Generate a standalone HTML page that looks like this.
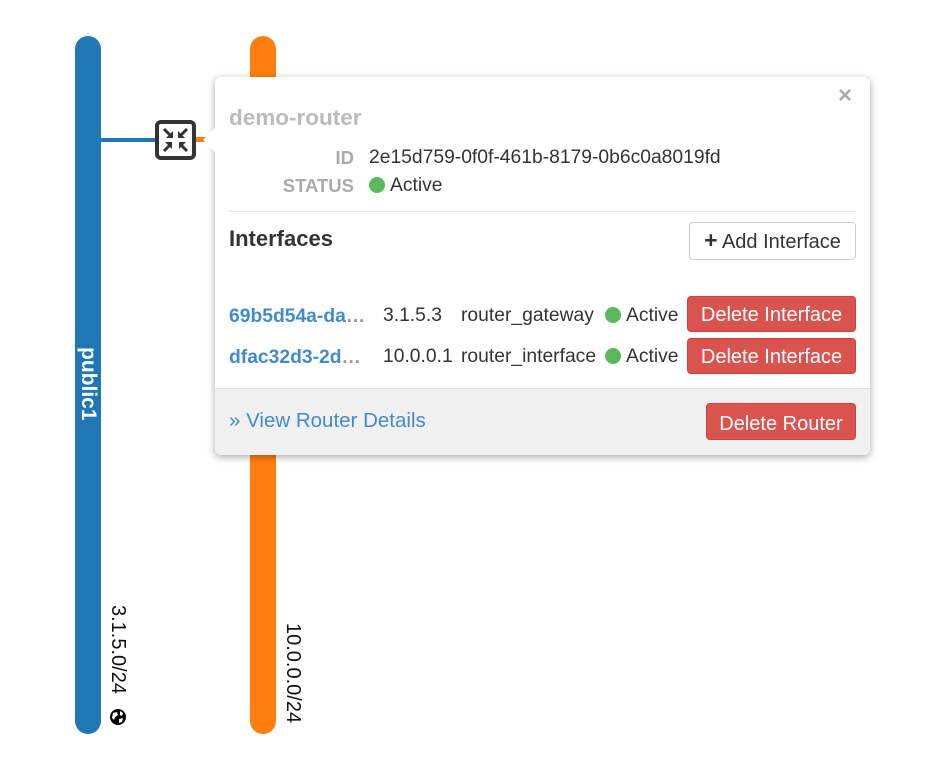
<!DOCTYPE html>
<html><head><style>
body{margin:0;width:937px;height:764px;background:#fff;font-family:"Liberation Sans",sans-serif;position:relative;overflow:hidden}
.a{position:absolute}
.bar{position:absolute;width:26px;border-radius:13px}
.rot{position:absolute;transform:rotate(90deg);transform-origin:0 0;white-space:nowrap}
.btn{position:absolute;border-radius:4px;font-size:20px;text-align:center;box-sizing:border-box;white-space:nowrap}
.red{background:#d9534f;color:#fff;border:1px solid #d43f3a}
.dot{display:inline-block;width:16px;height:16px;border-radius:50%;background:#5cb85c;vertical-align:-2px;margin-right:5px}
.t{position:absolute;font-size:19.3px;color:#333;white-space:nowrap}
</style></head><body>
<div class="bar" style="left:75px;top:36px;height:698px;background:#1f77b4"></div>
<div class="bar" style="left:250px;top:36px;height:698px;background:#ff7f0e"></div>
<div class="a" style="left:101px;top:138px;width:56px;height:4px;background:#1f77b4"></div>
<div class="a" style="left:195px;top:137px;width:12px;height:5px;background:#ff7f0e"></div>
<div class="a" style="left:155px;top:120px;width:41px;height:40px;box-sizing:border-box;border:4px solid #333;border-radius:6px;background:#fff">
<svg width="33" height="32" viewBox="0 0 33 32" style="position:absolute;left:0;top:0"><g stroke="#333" stroke-width="3" fill="#333">
<line x1="5" y1="5" x2="12" y2="12"/><polygon points="14,14 14,7 7,14" stroke="none"/>
<line x1="28" y1="5" x2="21" y2="12"/><polygon points="19,14 19,7 26,14" stroke="none"/>
<line x1="5" y1="27" x2="11" y2="21"/><polygon points="13,18 13,25 6,18" stroke="none"/>
<line x1="28" y1="27" x2="22" y2="21"/><polygon points="20,18 20,25 27,18" stroke="none"/>
</g></svg></div>
<div class="rot" style="left:101px;top:347px;color:#fff;font-weight:bold;font-size:21px;line-height:26px">public1</div>
<div class="rot" style="left:129px;top:605px;color:#111;font-size:20px;line-height:23px">3.1.5.0/24</div>
<svg class="a" style="left:109px;top:708px" width="18" height="18" viewBox="0 0 18 18"><circle cx="9" cy="9" r="8" fill="#000"/><path d="M4 5 L8 4 L9 7 L6 9 L5 12 L3 10Z M11 3 L14 5 L13 8 L11 7Z M10 11 L14 10 L13 14 L10 15Z" fill="#fff"/></svg>
<div class="rot" style="left:304px;top:623px;color:#111;font-size:20px;line-height:23px">10.0.0.0/24</div>

<div class="a" style="left:215px;top:77px;width:655px;height:378px;background:#fff;border-radius:6px;box-shadow:0 2px 8px rgba(0,0,0,.35);overflow:hidden">
<div class="a" style="left:0;top:311px;width:655px;height:67px;background:#f0f0f0;border-top:1px solid #ddd"></div>
<div class="a" style="left:14px;top:134px;width:627px;height:1px;background:#e5e5e5"></div>
<div class="a" style="left:623px;top:5px;font-size:24px;font-weight:bold;color:#aaa">×</div>
<div class="a" style="left:14px;top:28px;font-size:22.5px;font-weight:bold;color:#bbb">demo-router</div>
<div class="t" style="right:516px;top:70px;color:#aaa;font-weight:bold;font-size:18.5px">ID</div>
<div class="t" style="left:154px;top:70px">2e15d759-0f0f-461b-8179-0b6c0a8019fd</div>
<div class="t" style="right:516px;top:98px;color:#aaa;font-weight:bold;font-size:18.5px">STATUS</div>
<div class="t" style="left:154px;top:98px"><span class="dot"></span>Active</div>
<div class="a" style="left:14px;top:149px;font-size:22px;font-weight:bold;color:#333">Interfaces</div>
<div class="btn" style="left:474px;top:145px;width:167px;height:38px;border:1px solid #ccc;color:#333;line-height:35px"><b style="font-size:23px">+</b> Add Interface</div>
<div class="t" style="left:14px;top:229px;color:#428bca;font-weight:bold">69b5d54a-da<span style="color:#999">…</span></div>
<div class="t" style="left:168px;top:228px">3.1.5.3</div>
<div class="t" style="left:246px;top:228px">router_gateway</div>
<div class="t" style="left:390px;top:228px"><span class="dot"></span>Active</div>
<div class="btn red" style="left:472px;top:219px;width:169px;height:36px;line-height:37px">Delete Interface</div>
<div class="t" style="left:14px;top:270px;color:#428bca;font-weight:bold">dfac32d3-2d<span style="color:#999">…</span></div>
<div class="t" style="left:168px;top:269px">10.0.0.1</div>
<div class="t" style="left:246px;top:269px">router_interface</div>
<div class="t" style="left:390px;top:269px"><span class="dot"></span>Active</div>
<div class="btn red" style="left:472px;top:261px;width:169px;height:36px;line-height:37px">Delete Interface</div>
<div class="t" style="left:14px;top:332px;color:#428bca;font-size:20.5px">» View Router Details</div>
<div class="btn red" style="left:491px;top:326px;width:150px;height:37px;line-height:40px">Delete Router</div>
</div>
<svg class="a" style="left:203px;top:127px" width="14" height="28"><polygon points="13,0 0,13 13,26" fill="#fff"/></svg>
</body></html>
